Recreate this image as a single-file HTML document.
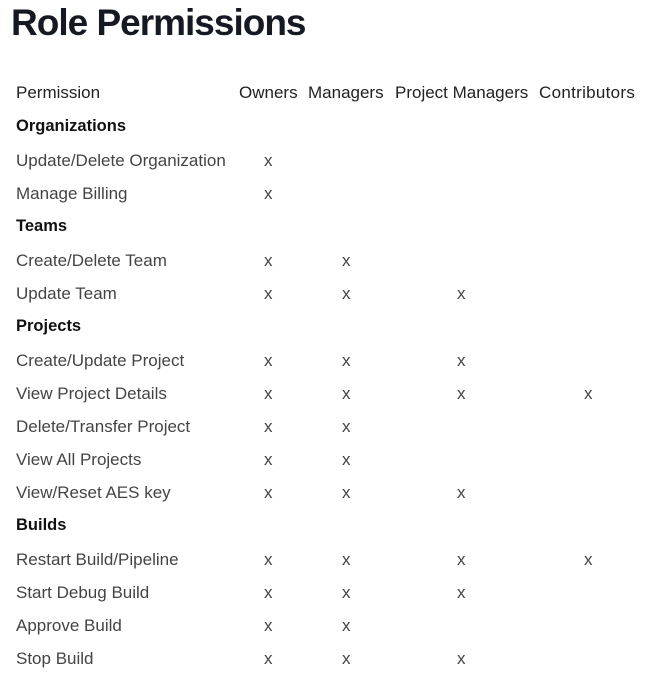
<!DOCTYPE html>
<html><head><style>
body{margin:0;background:#fff;font-family:"Liberation Sans",sans-serif;width:661px;height:683px;overflow:hidden;position:relative}
h1{position:absolute;left:11px;top:-1px;margin:0;font-size:37px;font-weight:bold;color:#151a22;letter-spacing:-1px;line-height:48px}
.r{position:absolute;left:0;height:33px;line-height:33px;font-size:17px;color:#444;width:661px}
.r span{position:absolute;white-space:nowrap}
.h{color:#222}
.s{color:#111;font-weight:bold;font-size:16.5px}
</style></head><body>
<h1>Role Permissions</h1>
<div class="r h" style="top:76px"><span style="left:16px">Permission</span><span style="left:239px">Owners</span><span style="left:308px">Managers</span><span style="left:395px">Project Managers</span><span style="left:539px;letter-spacing:0.3px">Contributors</span></div>
<div class="r s" style="top:110px"><span style="left:16px">Organizations</span></div>
<div class="r" style="top:144px"><span style="left:16px">Update/Delete Organization</span><span style="left:264px">x</span></div>
<div class="r" style="top:177px"><span style="left:16px">Manage Billing</span><span style="left:264px">x</span></div>
<div class="r s" style="top:210px"><span style="left:16px">Teams</span></div>
<div class="r" style="top:244px"><span style="left:16px">Create/Delete Team</span><span style="left:264px">x</span><span style="left:342px">x</span></div>
<div class="r" style="top:277px"><span style="left:16px">Update Team</span><span style="left:264px">x</span><span style="left:342px">x</span><span style="left:457px">x</span></div>
<div class="r s" style="top:310px"><span style="left:16px">Projects</span></div>
<div class="r" style="top:344px"><span style="left:16px">Create/Update Project</span><span style="left:264px">x</span><span style="left:342px">x</span><span style="left:457px">x</span></div>
<div class="r" style="top:377px"><span style="left:16px">View Project Details</span><span style="left:264px">x</span><span style="left:342px">x</span><span style="left:457px">x</span><span style="left:584px">x</span></div>
<div class="r" style="top:410px"><span style="left:16px">Delete/Transfer Project</span><span style="left:264px">x</span><span style="left:342px">x</span></div>
<div class="r" style="top:443px"><span style="left:16px">View All Projects</span><span style="left:264px">x</span><span style="left:342px">x</span></div>
<div class="r" style="top:476px"><span style="left:16px">View/Reset AES key</span><span style="left:264px">x</span><span style="left:342px">x</span><span style="left:457px">x</span></div>
<div class="r s" style="top:509px"><span style="left:16px">Builds</span></div>
<div class="r" style="top:543px"><span style="left:16px">Restart Build/Pipeline</span><span style="left:264px">x</span><span style="left:342px">x</span><span style="left:457px">x</span><span style="left:584px">x</span></div>
<div class="r" style="top:576px"><span style="left:16px">Start Debug Build</span><span style="left:264px">x</span><span style="left:342px">x</span><span style="left:457px">x</span></div>
<div class="r" style="top:609px"><span style="left:16px">Approve Build</span><span style="left:264px">x</span><span style="left:342px">x</span></div>
<div class="r" style="top:642px"><span style="left:16px">Stop Build</span><span style="left:264px">x</span><span style="left:342px">x</span><span style="left:457px">x</span></div>
</body></html>
